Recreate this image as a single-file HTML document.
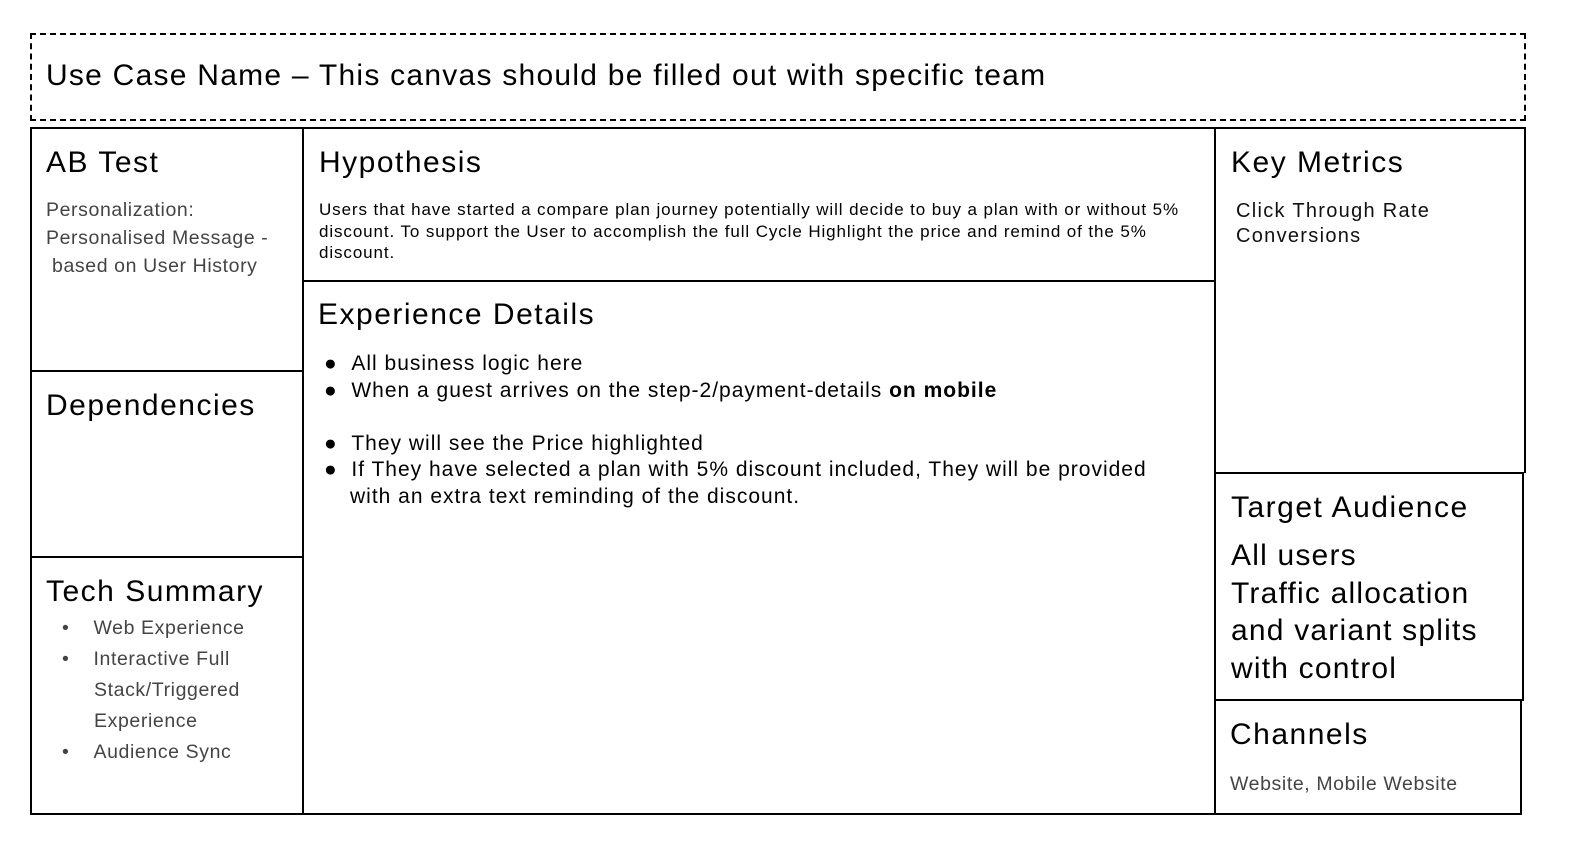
<!DOCTYPE html>
<html><head><meta charset="utf-8"><style>
body{margin:0;width:1590px;height:848px;background:#fff;position:relative;font-family:"Liberation Sans",sans-serif;color:#000;overflow:hidden}
.a{position:absolute;box-sizing:border-box}
.b{border:2px solid #000}
.h{font-size:30px;letter-spacing:1.5px;white-space:nowrap}
.g{color:#444;font-size:19.5px;line-height:28px;letter-spacing:0.6px}
</style></head><body>
<div class="a" style="left:30px;top:33px;width:1496px;height:88px;border:2px dashed #000"></div>
<div class="a h" style="left:46px;top:59px;font-size:30px;letter-spacing:1.25px">Use Case Name – This canvas should be filled out with specific team</div>

<div class="a b" style="left:30px;top:127px;width:1496px;height:688px"></div>
<div class="a" style="left:302px;top:127px;width:2px;height:688px;background:#000"></div>
<div class="a" style="left:1214px;top:127px;width:2px;height:688px;background:#000"></div>
<div class="a" style="left:30px;top:370px;width:273px;height:2px;background:#000"></div>
<div class="a" style="left:30px;top:556px;width:273px;height:2px;background:#000"></div>
<div class="a" style="left:303px;top:280px;width:912px;height:2px;background:#000"></div>
<div class="a" style="left:1215px;top:472px;width:310px;height:2px;background:#000"></div>
<div class="a" style="left:1215px;top:699px;width:308px;height:2px;background:#000"></div>
<div class="a" style="left:1522px;top:473px;width:4px;height:342px;background:#fff"></div>
<div class="a" style="left:1522px;top:473px;width:2px;height:228px;background:#000"></div>
<div class="a" style="left:1520px;top:700px;width:2px;height:115px;background:#000"></div>

<div class="a h" style="left:46px;top:146px">AB Test</div>
<div class="a g" style="left:46px;top:196px">Personalization:<br>Personalised Message -<br>&nbsp;based on User History</div>

<div class="a h" style="left:46px;top:389px">Dependencies</div>

<div class="a h" style="left:46px;top:575px">Tech Summary</div>
<div class="a g" style="left:62px;top:613px;line-height:31px">
<div>•&nbsp;&nbsp;&nbsp;&nbsp;Web Experience</div>
<div>•&nbsp;&nbsp;&nbsp;&nbsp;Interactive Full</div>
<div style="padding-left:32px">Stack/Triggered</div>
<div style="padding-left:32px">Experience</div>
<div>•&nbsp;&nbsp;&nbsp;&nbsp;Audience Sync</div>
</div>

<div class="a h" style="left:319px;top:146px">Hypothesis</div>
<div class="a" style="left:319px;top:199px;width:875px;font-size:17px;letter-spacing:0.9px;line-height:21.5px">Users that have started a compare plan journey potentially will decide to buy a plan with or without 5% discount. To support the User to accomplish the full Cycle Highlight the price and remind of the 5% discount.</div>

<div class="a h" style="left:318px;top:298px">Experience Details</div>
<div class="a" style="left:324px;top:351px;font-size:21px;letter-spacing:1px;line-height:26.5px;width:880px;white-space:nowrap">
<div>●&nbsp;&nbsp;All business logic here</div>
<div>●&nbsp;&nbsp;When a guest arrives on the step-2/payment-details <b>on mobile</b></div>
<div>&nbsp;</div>
<div>●&nbsp;&nbsp;They will see the Price highlighted</div>
<div>●&nbsp;&nbsp;If They have selected a plan with 5% discount included, They will be provided</div>
<div style="padding-left:26px">with an extra text reminding of the discount.</div>
</div>

<div class="a h" style="left:1231px;top:146px">Key Metrics</div>
<div class="a" style="left:1236px;top:199px;font-size:20px;letter-spacing:1.3px;line-height:25px;color:#111">Click Through Rate<br>Conversions</div>

<div class="a h" style="left:1231px;top:491px">Target Audience</div>
<div class="a" style="left:1231px;top:537px;font-size:30px;letter-spacing:1.2px;line-height:37.5px;white-space:nowrap">All users<br>Traffic allocation<br>and variant splits<br>with control</div>

<div class="a h" style="left:1230px;top:718px">Channels</div>
<div class="a g" style="left:1230px;top:770px">Website, Mobile Website</div>
</body></html>
